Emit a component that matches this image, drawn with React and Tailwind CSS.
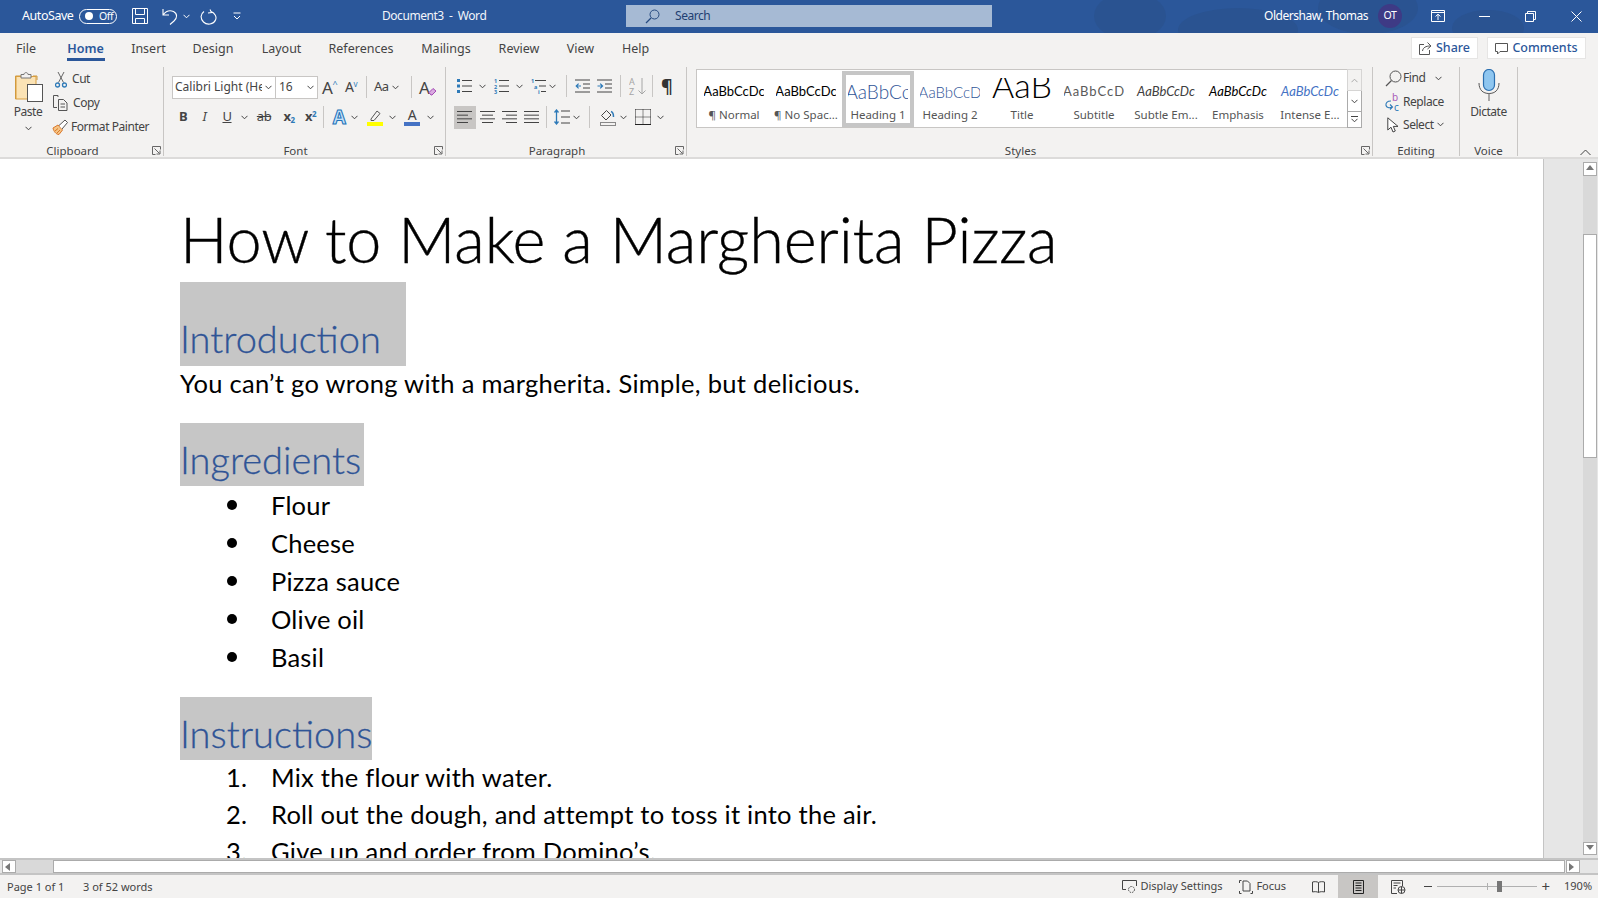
import React from 'react';

const UI = "font-['Noto_Sans','Open_Sans',sans-serif]";
const DOC = "font-['Lato','Carlito',sans-serif]";

const Chev = ({ className = '', color = '#444' }) => (
  <svg width="7" height="5" viewBox="0 0 7 5" className={className} fill="none" stroke={color} strokeWidth="1">
    <path d="M0.5 0.8 L3.5 3.8 L6.5 0.8" />
  </svg>
);

const VSep = ({ className = '' }) => <div className={`w-px h-[22px] bg-[#c8c6c4] ${className}`} />;

const Launcher = () => (
  <svg width="9" height="9" viewBox="0 0 9 9" fill="none" stroke="#666" strokeWidth="1">
    <path d="M8.5 3.5V0.5H0.5V8.5H3.5" />
    <path d="M2.5 2.5L7.5 7.5M8 4.5V8H4.5" />
  </svg>
);

// horizontal text lines used by the paragraph buttons
const Lines = ({ rows, w = 16, h = 14 }) => (
  <svg width={w} height={h} viewBox={`0 0 ${w} ${h}`} stroke="#444" strokeWidth="1">
    {rows.map(([x1, x2], i) => (
      <line key={i} x1={x1} x2={x2} y1={1.5 + i * ((h - 3) / (rows.length - 1))} y2={1.5 + i * ((h - 3) / (rows.length - 1))} />
    ))}
  </svg>
);

const Bullets = () => (
  <svg width="17" height="16" viewBox="0 0 17 16">
    <rect x="0" y="1" width="3" height="3" fill="#2e7ab8" />
    <rect x="0" y="6.5" width="3" height="3" fill="#2e7ab8" />
    <rect x="0" y="12" width="3" height="3" fill="#2e7ab8" />
    <path d="M5 2.5H15M5 8H15M5 13.5H15" stroke="#444" />
  </svg>
);

const Numbering = () => (
  <svg width="17" height="16" viewBox="0 0 17 16" fontFamily="Noto Sans, sans-serif" fontSize="5.5" fontWeight="700" fill="#2e7ab8">
    <text x="0" y="5">1</text>
    <text x="0" y="10.5">2</text>
    <text x="0" y="16">3</text>
    <path d="M5 2.5H15M5 8H15M5 13.5H15" stroke="#444" />
  </svg>
);

const Multilevel = () => (
  <svg width="17" height="16" viewBox="0 0 17 16" fontFamily="Noto Sans, sans-serif" fontSize="5.5" fontWeight="700" fill="#2e7ab8">
    <text x="0" y="5">1</text>
    <text x="3" y="10.5">a</text>
    <text x="7" y="16">i</text>
    <path d="M4 2.5H15M8 8H15M10 13.5H15" stroke="#444" />
  </svg>
);

const Indent = ({ out }) => (
  <svg width="16" height="14" viewBox="0 0 16 14">
    <path d="M0 1H15M8 5H15M8 9H15M0 13H15" stroke="#444" />
    {out ? (
      <path d="M6 7H1.2M3.6 4.6L1.2 7L3.6 9.4" stroke="#2e7ab8" strokeWidth="1.2" fill="none" />
    ) : (
      <path d="M0.5 7H5.5M3.2 4.6L5.6 7L3.2 9.4" stroke="#2e7ab8" strokeWidth="1.2" fill="none" />
    )}
  </svg>
);

const Sort = () => (
  <svg width="18" height="19" viewBox="0 0 18 19" fontFamily="Noto Sans, sans-serif" fontSize="9" fill="#a6a6a6">
    <text x="0" y="8">A</text>
    <text x="0" y="18">Z</text>
    <path d="M13 1V17M9.5 13.5L13 17L16.5 13.5" stroke="#a6a6a6" fill="none" />
  </svg>
);

const LineSpacing = () => (
  <svg width="16" height="16" viewBox="0 0 16 16">
    <path d="M7 2H16M7 8H16M7 14H16" stroke="#444" />
    <path d="M2.5 1V15M0.5 3.5L2.5 1L4.5 3.5M0.5 12.5L2.5 15L4.5 12.5" stroke="#2e7ab8" strokeWidth="1.3" fill="none" />
  </svg>
);

const Shading = () => (
  <svg width="16" height="17" viewBox="0 0 16 17" fill="none">
    <path d="M6.5 1.5L1.5 6.5L6 11L11 6Z" stroke="#444" />
    <path d="M11 2.5C13 3 13.5 4.5 13.5 8" stroke="#2e7ab8" strokeWidth="1.5" />
    <rect x="0.5" y="13.5" width="15" height="3" stroke="#888" fill="#f3f2f1" />
  </svg>
);

const Borders = () => (
  <svg width="16" height="16" viewBox="0 0 16 16" fill="none" stroke="#222">
    <path d="M0.5 0.5H15.5M0.5 0.5V15M15.5 0.5V15M8 0.5V15M0.5 8H15.5" strokeDasharray="1 1" />
    <path d="M0 15.5H16" />
  </svg>
);

const Paste = () => (
  <svg width="29" height="31" viewBox="0 0 29 31" fill="none">
    <path d="M1.5 28V5H7M19 5H23V9" stroke="#c8963c" strokeWidth="1" />
    <rect x="2" y="5.5" width="20" height="22.5" fill="#fbe3b5" stroke="#d99e3f" />
    <path d="M7 7V3.5H10C10 1 14 1 14 3.5H17V7Z" fill="#f3f2f1" stroke="#777" />
    <rect x="13.5" y="13.5" width="15" height="17" fill="#fff" stroke="#555" />
  </svg>
);

const Cut = () => (
  <svg width="12" height="17" viewBox="0 0 12 17" fill="none">
    <path d="M3 1L8.5 11.5M9 1L3.5 11.5" stroke="#666" />
    <circle cx="2.5" cy="14" r="2" stroke="#2e7ab8" strokeWidth="1.3" />
    <circle cx="9.5" cy="14" r="2" stroke="#2e7ab8" strokeWidth="1.3" />
  </svg>
);

const Copy = () => (
  <svg width="16" height="16" viewBox="0 0 16 16" fill="none" stroke="#555">
    <path d="M6 0.5H1.5V12.5H5" />
    <path d="M6.5 4.5H11.5L15 8V15.5H6.5ZM8.5 9H13M8.5 12H13" />
    <path d="M2 0.5H6V2" />
  </svg>
);

const Painter = () => (
  <svg width="17" height="16" viewBox="0 0 17 16" fill="none">
    <path d="M1 9L6 6L10.5 11L7 15.5C4 15.5 1.5 12 1 9Z" fill="#f6c585" stroke="#d9772b" />
    <path d="M7 6.5L13 1L15.5 3.5L10 10" stroke="#555" fill="#fff" />
    <path d="M3 12L6 9.5M5 14L8 11" stroke="#d9772b" />
  </svg>
);

const Find = () => (
  <svg width="17" height="17" viewBox="0 0 17 17" fill="none" stroke="#555">
    <circle cx="10.5" cy="6.5" r="5.5" />
    <path d="M6.5 10.5L1 16" strokeWidth="1.3" />
  </svg>
);

const Replace = () => (
  <svg width="16" height="18" viewBox="0 0 16 18" fontFamily="Noto Sans, sans-serif" fontSize="10" fill="none">
    <text x="7" y="7.5" fill="#a85cb8" stroke="none">b</text>
    <text x="9" y="17.5" fill="#2e7ab8" stroke="none">c</text>
    <path d="M6 8C2 8 0.5 10 1 12.5C1.5 14.5 4 15.5 7 14M5 11.5L7.5 14L5 16.5" stroke="#2e7ab8" strokeWidth="1.1" />
  </svg>
);

const Cursor = () => (
  <svg width="12" height="16" viewBox="0 0 12 16" fill="#fff" stroke="#444">
    <path d="M0.8 0.8V13L4 10.2L6 15L8.3 14L6.3 9.4H11Z" />
  </svg>
);

const Mic = () => (
  <svg width="22" height="32" viewBox="0 0 22 32" fill="none">
    <rect x="5.5" y="0.5" width="11" height="21" rx="5.5" fill="#8ec6f0" stroke="#2b6fb0" strokeWidth="1.2" />
    <path d="M1 14C1 21 5 24.5 11 24.5C17 24.5 21 21 21 14" stroke="#555" />
    <path d="M11 24.5V32" stroke="#888" strokeWidth="1.4" />
  </svg>
);

const GALLERY = [
  { label: '¶ Normal', sample: 'AaBbCcDc', cls: "text-[13px] text-black" },
  { label: '¶ No Spac...', sample: 'AaBbCcDc', cls: "text-[13px] text-black" },
  { label: 'Heading 1', sample: 'AaBbCc', cls: "text-[19px] font-light text-[#2f5496]", active: true },
  { label: 'Heading 2', sample: 'AaBbCcD', cls: "text-[15px] font-light text-[#2f5496]" },
  { label: 'Title', sample: 'AaB', cls: "relative top-[-7px] text-[34px] font-light leading-[30px] text-black" },
  { label: 'Subtitle', sample: 'AaBbCcD', cls: "text-[13px] tracking-[1px] text-[#5a5a5a]" },
  { label: 'Subtle Em...', sample: 'AaBbCcDc', cls: "text-[13px] italic text-[#404040]" },
  { label: 'Emphasis', sample: 'AaBbCcDc', cls: "text-[13px] italic text-black" },
  { label: 'Intense E...', sample: 'AaBbCcDc', cls: "text-[13px] italic text-[#4472c4]" },
];

const TABS = [
  ['File', 'w-[52px]'],
  ['Home', 'w-[67px]'],
  ['Insert', 'w-[59px]'],
  ['Design', 'w-[70px]'],
  ['Layout', 'w-[67px]'],
  ['References', 'w-[92px]'],
  ['Mailings', 'w-[78px]'],
  ['Review', 'w-[68px]'],
  ['View', 'w-[55px]'],
  ['Help', 'w-[55px]'],
];

const TitleBar = () => (
  <div className="relative flex h-[33px] items-center overflow-hidden bg-[#2b579a] pb-px text-white tracking-[-0.45px]">
    <svg className="absolute right-0 top-0" width="520" height="33" viewBox="0 0 520 33" fill="#2a5391">
      <ellipse cx="52" cy="16" rx="36" ry="24" />
      <ellipse cx="160" cy="30" rx="60" ry="22" />
      <ellipse cx="290" cy="8" rx="50" ry="26" />
      <ellipse cx="410" cy="28" rx="36" ry="18" />
    </svg>
    <span className="relative ml-[22px] w-[57px] text-[12.5px]">AutoSave</span>
    <div className="relative flex h-[15px] w-[38px] items-center rounded-full border border-white">
      <div className="ml-[5px] h-[8px] w-[8px] rounded-full bg-white" />
      <span className="ml-[6px] text-[10.5px] leading-none">Off</span>
    </div>
    <svg className="relative ml-[15px]" width="16" height="16" viewBox="0 0 16 16" fill="none" stroke="#fff">
      <path d="M0.5 0.5H15.5V15.5H0.5ZM3.5 0.5V6.5H12.5V0.5M3.5 15.5V10.5H12.5V15.5" />
    </svg>
    <svg className="relative ml-[14px]" width="17" height="17" viewBox="0 0 17 17" fill="none" stroke="#fff" strokeWidth="1.1">
      <path d="M1 1V7H7M1 7C4 3 8 2 11.5 3.5C15.5 5.5 15.5 10 12 13L8 16.5" />
    </svg>
    <Chev className="relative ml-[4px]" color="#fff" />
    <svg className="relative ml-[10px]" width="17" height="17" viewBox="0 0 17 17" fill="none" stroke="#fff" strokeWidth="1.1">
      <path d="M10 1.5L11.5 4.5L8 5M11 3.5C15 5 17 9 15.5 12C13.5 16.5 7 17.5 3.5 14C0 10.5 0.5 6 4 3.5" />
    </svg>
    <svg className="relative ml-[16px]" width="8" height="8" viewBox="0 0 8 8" fill="none" stroke="#fff">
      <path d="M0.5 1H7.5M1 4L4 7L7 4" />
    </svg>
    <span className="relative ml-[141px] w-[244px] text-[12px] text-[#f2f5fa]">Document3 &nbsp;-&nbsp; Word</span>
    <div className="relative flex h-[22px] w-[366px] items-center bg-[#a6bad4] text-[12px] text-[#1f3f72]">
      <svg className="ml-[19px]" width="15" height="15" viewBox="0 0 15 15" fill="none" stroke="#264a80">
        <circle cx="9.5" cy="5.5" r="4.5" />
        <path d="M6 9L1 14" strokeWidth="1.2" />
      </svg>
      <span className="ml-[15px]">Search</span>
    </div>
    <span className="relative ml-[272px] w-[114px] whitespace-nowrap text-[12px]">Oldershaw, Thomas</span>
    <div className="relative flex h-[24px] w-[24px] items-center justify-center rounded-full bg-[#3e3a85] text-[10.5px]">OT</div>
    <svg className="relative ml-[29px]" width="14" height="12" viewBox="0 0 14 12" fill="none" stroke="#fff">
      <path d="M0.5 0.5H13.5V11.5H0.5ZM0.5 2.5H13.5M7 10V4.5M4.5 6.5L7 4.2L9.5 6.5" />
    </svg>
    <div className="relative ml-[34px] h-px w-[11px] bg-white" />
    <svg className="relative ml-[35px]" width="11" height="11" viewBox="0 0 11 11" fill="none" stroke="#fff">
      <path d="M0.5 2.5H8.5V10.5H0.5ZM2.5 2.5V0.5H10.5V8.5H8.5" />
    </svg>
    <svg className="relative ml-[35px]" width="11" height="11" viewBox="0 0 11 11" fill="none" stroke="#fff">
      <path d="M0.5 0.5L10.5 10.5M10.5 0.5L0.5 10.5" />
    </svg>
  </div>
);

const TabRow = () => (
  <div className="flex h-[29px] bg-[#f3f2f1] text-[12.5px] text-[#444]">
    {TABS.map(([name, w]) => (
      <div key={name} className={`relative flex h-full items-center justify-center pt-[4px] ${w}`}>
        <span className={name === 'Home' ? 'font-semibold text-[#2b579a]' : ''}>{name}</span>
        {name === 'Home' && <div className="absolute bottom-[1px] left-[15px] h-[3px] w-[38px] bg-[#2b579a]" />}
      </div>
    ))}
    <div className="ml-auto mt-[4px] flex h-[22px] text-[12.5px] font-medium text-[#2b579a]">
      <div className="flex w-[67px] items-center justify-center gap-[4px] border border-[#e6e5e4] bg-white pt-px">
        <svg width="13" height="13" viewBox="0 0 13 13" fill="none" stroke="#555">
          <path d="M5 2.5H0.5V12.5H10.5V8M3.5 9C4 5.5 7 4 11 4M8.5 0.5L12 4L8.5 7" />
        </svg>
        Share
      </div>
      <div className="ml-[9px] mr-[12px] flex w-[99px] items-center justify-center gap-[4px] border border-[#e6e5e4] bg-white pt-px">
        <svg width="13" height="12" viewBox="0 0 13 12" fill="none" stroke="#555">
          <path d="M0.5 0.5H12.5V8.5H5L2.5 11V8.5H0.5Z" />
        </svg>
        Comments
      </div>
    </div>
  </div>
);

const Group = ({ label, className, launcher, children }) => (
  <section className={`flex h-[89px] shrink-0 flex-col border-r border-[#c8c6c4] ${className}`}>
    <div className="h-[78px] tracking-[-0.45px]">{children}</div>
    <div className={`relative flex h-[11px] items-center justify-center text-[11.5px] text-[#444] ${launcher ? 'pr-[18px]' : ''}`}>
      {label}
      {launcher && (
        <span className="absolute right-[2px] top-[1px] flex">
          <Launcher />
        </span>
      )}
    </div>
  </section>
);

const Ribbon = () => (
  <div className="flex h-[97px] bg-[#f3f2f1] pt-[5px] text-[12px] text-[#444] border-b-2 border-[#dcdbda]">
    {/* Clipboard */}
    <Group label="Clipboard" launcher className="w-[164px]">
      <div className="flex h-full">
        <div className="ml-[9px] flex w-[38px] flex-col items-center pt-[4px]">
          <Paste />
          <span className="mt-[1px]">Paste</span>
          <Chev className="mt-[5px]" />
        </div>
        <div className="ml-[5px] flex flex-col">
          <div className="flex h-[24px] items-center"><span className="ml-[3px] flex w-[17px]"><Cut /></span>Cut</div>
          <div className="flex h-[24px] items-center"><span className="flex w-[21px]"><Copy /></span>Copy</div>
          <div className="flex h-[24px] items-center"><span className="flex w-[19px]"><Painter /></span>Format Painter</div>
        </div>
      </div>
    </Group>

    {/* Font */}
    <Group label="Font" launcher className="w-[282px]">
      <div className="mt-[8px] flex h-[24px] items-center">
        <div className="ml-[8px] flex h-[23px] w-[104px] items-center border border-[#c8c6c4] bg-white pl-[2px] text-[12px] tracking-normal">
          <span className="w-[87px] overflow-hidden whitespace-nowrap">Calibri Light (Headings)</span>
          <Chev className="ml-[3px]" />
        </div>
        <div className="-ml-px flex h-[23px] w-[43px] items-center border border-[#c8c6c4] bg-white pl-[3px] text-[12px] tracking-normal">
          <span className="w-[28px]">16</span>
          <Chev />
        </div>
        <div className="ml-[4px] flex w-[17px] items-start text-[17px] leading-none">A<span className="text-[9px] leading-[9px] text-[#2e7ab8]">^</span></div>
        <div className="ml-[6px] flex w-[14px] items-start text-[14px] leading-none">A<span className="text-[8px] leading-[8px] text-[#2e7ab8]">v</span></div>
        <VSep className="ml-[7px]" />
        <div className="ml-[7px] flex w-[28px] items-center gap-[3px] text-[13px]">Aa<Chev /></div>
        <VSep className="ml-[9px]" />
        <div className="relative ml-[7px] w-[18px] text-[17px] leading-none">
          A
          <svg className="absolute bottom-0 right-0" width="9" height="9" viewBox="0 0 9 9">
            <path d="M1 5.5L5 1.5L8 4L4 8H3Z" fill="#d9a9e0" stroke="#a349b5" />
          </svg>
        </div>
      </div>
      <div className="mt-[6px] flex h-[24px] items-center">
        <div className="ml-[8px] w-[22px] text-center text-[13px] font-bold">B</div>
        <div className="w-[21px] text-center text-[13px] italic">I</div>
        <div className="w-[24px] text-center text-[13px] underline">U</div>
        <div className="flex w-[11px] justify-center"><Chev /></div>
        <div className="ml-[3px] w-[22px] text-center text-[13px] line-through">ab</div>
        <div className="ml-[3px] w-[22px] text-center text-[13px] font-bold">x<sub className="text-[8px] text-[#2e7ab8]">2</sub></div>
        <div className="w-[21px] text-center text-[13px] font-bold">x<sup className="text-[8px] text-[#2e7ab8]">2</sup></div>
        <VSep className="ml-[2px]" />
        <div className="ml-[7px] w-[16px] text-center text-[19px] font-bold leading-none text-[#c5e2f8] [-webkit-text-stroke:1px_#2272b9]">A</div>
        <div className="ml-[2px] flex w-[10px] justify-center"><Chev /></div>
        <svg className="ml-[8px]" width="16" height="17" viewBox="0 0 16 17" fill="none">
          <path d="M4 10L10 2L13 4.5L7 11.5H4Z" stroke="#555" />
          <rect x="0" y="13" width="16" height="4" fill="#ffff00" />
        </svg>
        <div className="ml-[4px] flex w-[10px] justify-center"><Chev /></div>
        <div className="ml-[7px] flex w-[16px] flex-col items-center">
          <span className="text-[14px] leading-[14px]">A</span>
          <div className="h-[4px] w-[16px] bg-[#4472c4]" />
        </div>
        <div className="ml-[5px] flex w-[10px] justify-center"><Chev /></div>
      </div>
    </Group>

    {/* Paragraph */}
    <Group label="Paragraph" launcher className="w-[241px]">
      <div className="mt-[7px] flex h-[24px] items-center">
        <span className="ml-[11px] flex"><Bullets /></span>
        <Chev className="ml-[5px]" />
        <span className="ml-[8px] flex"><Numbering /></span>
        <Chev className="ml-[5px]" />
        <span className="ml-[8px] flex"><Multilevel /></span>
        <Chev className="ml-[1px]" />
        <VSep className="ml-[10px]" />
        <span className="ml-[8px] flex"><Indent out /></span>
        <span className="ml-[6px] flex"><Indent /></span>
        <VSep className="ml-[7px]" />
        <span className="ml-[8px] flex"><Sort /></span>
        <VSep className="ml-[5px]" />
        <span className="ml-[8px] text-[18px] font-bold leading-none text-[#333]">¶</span>
      </div>
      <div className="mt-[7px] flex h-[24px] items-center">
        <div className="ml-[8px] flex h-[23px] w-[22px] items-center justify-center bg-[#c8c6c4]"><Lines rows={[[0, 15], [0, 11], [0, 15], [0, 11]]} /></div>
        <span className="ml-[4px] flex"><Lines rows={[[0, 15], [2, 13], [0, 15], [2, 13]]} /></span>
        <span className="ml-[6px] flex"><Lines rows={[[0, 15], [4, 15], [0, 15], [4, 15]]} /></span>
        <span className="ml-[6px] flex"><Lines rows={[[0, 15], [0, 15], [0, 15], [0, 15]]} /></span>
        <VSep className="ml-[6px]" />
        <span className="ml-[7px] flex"><LineSpacing /></span>
        <Chev className="ml-[3px]" />
        <VSep className="ml-[9px]" />
        <span className="ml-[10px] flex"><Shading /></span>
        <Chev className="ml-[4px]" />
        <span className="ml-[8px] flex"><Borders /></span>
        <Chev className="ml-[6px]" />
      </div>
    </Group>

    {/* Styles */}
    <Group label="Styles" launcher className="w-[686px]">
      <div className="ml-[9px] mt-[2px] flex h-[59px] tracking-normal">
        <div className="flex h-[59px] w-[651px] border border-r-0 border-[#c8c6c4] bg-white pl-px pt-px">
          {GALLERY.map((g) => (
            <div
              key={g.label}
              className={`flex h-[56px] w-[72px] shrink-0 flex-col items-center overflow-hidden ${g.active ? 'border-[4px] border-[#c6c6c6]' : 'border-[4px] border-transparent'}`}
            >
              <div className={`mt-[3px] flex h-[28px] w-[60px] shrink-0 items-center justify-center overflow-hidden whitespace-nowrap ${DOC}`}>
                <span className={g.cls}>{g.sample}</span>
              </div>
              <span className="mt-[2px] whitespace-nowrap text-[11.5px] leading-[14px] text-[#555]">{g.label}</span>
            </div>
          ))}
        </div>
        <div className="flex w-[15px] flex-col">
          <div className="flex h-[22px] items-center justify-center border border-[#d6d5d4] bg-[#f3f2f1]">
            <Chev className="rotate-180" color="#aaa" />
          </div>
          <div className="flex h-[21px] items-center justify-center border border-t-0 border-[#ababab] bg-white"><Chev /></div>
          <div className="flex h-[16px] flex-col items-center justify-center gap-[1px] border border-t-0 border-[#ababab] bg-white">
            <div className="h-px w-[7px] bg-[#444]" />
            <Chev />
          </div>
        </div>
      </div>
    </Group>

    {/* Editing */}
    <Group label="Editing" className="w-[87px]">
      <div className="-mt-px flex h-[24px] items-center pl-[12px]"><span className="flex w-[18px]"><Find /></span>Find<Chev className="ml-[10px]" /></div>
      <div className="flex h-[24px] items-center pl-[12px]"><span className="flex w-[18px]"><Replace /></span>Replace</div>
      <div className="flex h-[21px] items-center pl-[14px]"><span className="flex w-[16px]"><Cursor /></span>Select<Chev className="ml-[3px]" /></div>
    </Group>

    {/* Voice */}
    <Group label="Voice" className="w-[58px]">
      <div className="flex flex-col items-center pt-[2px]">
        <Mic />
        <span className="mt-[2px]">Dictate</span>
      </div>
    </Group>

    <div className="flex flex-1 items-end justify-end pb-[1px] pr-[7px]">
      <svg width="11" height="7" viewBox="0 0 11 7" fill="none" stroke="#444">
        <path d="M0.5 6L5.5 1L10.5 6" />
      </svg>
    </div>
  </div>
);

const HL = ({ className, children }) => (
  <div className={`flex items-end bg-[#c6c6c6] ${className}`}>{children}</div>
);

const Heading = ({ children }) => (
  <span className="text-[38px] font-light leading-[44px] text-[#2f5496] [-webkit-text-stroke:0.3px_#2f5496]">{children}</span>
);

const Page = () => (
  <div className={`h-[699px] flex-1 overflow-hidden border-r border-[#c4c4c4] bg-white pl-[180px] text-black ${DOC}`}>
    <div className="flex h-[123px] items-end pb-[3px] text-[63px] font-light leading-[80px] tracking-[-0.1px] [-webkit-text-stroke:0.4px_#000]">How to Make a Margherita Pizza</div>
    <HL className="h-[84px] w-[226px] pb-[6px]"><Heading>Introduction</Heading></HL>
    <div className="h-[57px] text-[25.5px] leading-[34px] tracking-[0.3px]">You can’t go wrong with a margherita. Simple, but delicious.</div>
    <HL className="h-[63px] w-[184px] pb-[5px]"><Heading>Ingredients</Heading></HL>
    <ul className="h-[211px] text-[25.5px] leading-[38px] tracking-[0.2px]">
      {['Flour', 'Cheese', 'Pizza sauce', 'Olive oil', 'Basil'].map((t) => (
        <li key={t} className="flex h-[38px] items-center">
          <span className="ml-[47px] w-[44px]"><span className="block h-[10px] w-[10px] rounded-full bg-black" /></span>
          {t}
        </li>
      ))}
    </ul>
    <HL className="h-[63px] w-[192px] pb-[5px]"><Heading>Instructions</Heading></HL>
    <ol className="-mt-px text-[25.5px] leading-[37px] tracking-[0.25px]">
      {['Mix the flour with water.', 'Roll out the dough, and attempt to toss it into the air.', 'Give up and order from Domino’s.'].map((t, i) => (
        <li key={t} className="flex h-[37px] items-center">
          <span className="ml-[46px] w-[45px]">{i + 1}.</span>
          {t}
        </li>
      ))}
    </ol>
  </div>
);

const Arrow = ({ dir }) => {
  const d = { up: 'M1 6L5 1L9 6Z', down: 'M1 1L5 6L9 1Z', left: 'M6 1L1 5L6 9Z', right: 'M1 1L6 5L1 9Z' }[dir];
  return (
    <svg width="10" height="10" viewBox="0 0 10 10" fill="#777">
      <path d={d} />
    </svg>
  );
};

const VScroll = () => (
  <div className="flex h-[699px] w-[54px] shrink-0 justify-end bg-[#e6e6e6] pr-px pt-[3px]">
    <div className="flex h-[693px] w-[14px] flex-col bg-[#d9d9d9]">
      <div className="flex h-[14px] items-center justify-center border border-[#ababab] bg-white"><Arrow dir="up" /></div>
      <div className="h-[58px]" />
      <div className="h-[224px] border border-[#ababab] bg-white" />
      <div className="flex-1" />
      <div className="flex h-[13px] items-center justify-center border border-[#ababab] bg-white"><Arrow dir="down" /></div>
    </div>
  </div>
);

const HScroll = () => (
  <div className="flex h-[17px] items-center border-y-2 border-[#c4c4c4] bg-[#e6e6e6] pl-[2px]">
    <div className="flex h-[13px] w-[14px] items-center justify-center border border-[#ababab] bg-white"><Arrow dir="left" /></div>
    <div className="h-[13px] w-[37px] bg-[#d9d9d9]" />
    <div className="h-[13px] w-[1512px] border border-[#ababab] bg-white" />
    <div className="ml-[1px] flex h-[13px] w-[14px] items-center justify-center border border-[#ababab] bg-white"><Arrow dir="right" /></div>
  </div>
);

const StatusBar = () => (
  <div className="flex h-[23px] items-center bg-[#f3f2f1] pt-[1px] text-[11px] text-[#444]">
    <span className="ml-[7px] w-[76px]">Page 1 of 1</span>
    <span>3 of 52 words</span>
    <div className="-mt-px ml-auto flex h-[23px] items-center">
      <svg width="15" height="14" viewBox="0 0 15 14" fill="none" stroke="#444">
        <path d="M4 9.5H0.5V0.5H14.5V6" />
        <circle cx="9.5" cy="9.5" r="3" strokeDasharray="1.5 1" />
      </svg>
      <span className="ml-[3px] w-[99px] whitespace-nowrap">Display Settings</span>
      <svg width="14" height="14" viewBox="0 0 14 14" fill="none" stroke="#444">
        <path d="M4 1H8.5L11 3.5V11H4Z" />
        <path d="M0.5 3V0.5H2.5M0.5 11V13.5H2.5M13.5 11V13.5H11.5" />
      </svg>
      <span className="ml-[3px] w-[56px]">Focus</span>
      <svg width="13" height="12" viewBox="0 0 13 12" fill="none" stroke="#444">
        <path d="M6.5 1.5C5 0.5 2.5 0.5 0.5 1V11C2.5 10.5 5 10.5 6.5 11.5C8 10.5 10.5 10.5 12.5 11V1C10.5 0.5 8 0.5 6.5 1.5ZM6.5 1.5V11.5" />
      </svg>
      <div className="ml-[13px] flex h-full w-[40px] items-center justify-center bg-[#c8c6c4]">
        <svg width="11" height="14" viewBox="0 0 11 14" fill="none" stroke="#222">
          <path d="M0.5 0.5H10.5V13.5H0.5ZM2.5 3H8.5M2.5 5.5H8.5M2.5 8H8.5M2.5 10.5H8.5" />
        </svg>
      </div>
      <svg className="ml-[13px]" width="15" height="14" viewBox="0 0 15 14" fill="none" stroke="#444">
        <path d="M6 13.5H0.5V0.5H11.5V6M2.5 3H9.5M2.5 5.5H6.5M2.5 8H5" />
        <circle cx="10.5" cy="10" r="3.5" />
        <path d="M7 10H14M10.5 6.5V13.5" />
      </svg>
      <div className="ml-[18px] h-px w-[8px] bg-[#444]" />
      <div className="relative ml-[5px] h-px w-[100px] bg-[#b0b0b0]">
        <div className="absolute left-[50px] top-[-3px] h-[7px] w-px bg-[#b0b0b0]" />
        <div className="absolute left-[60px] top-[-5px] h-[11px] w-[5px] bg-[#777]" />
      </div>
      <span className="ml-[4px] text-[15px] leading-none">+</span>
      <span className="ml-[14px] mr-[7px] w-[27px]">190%</span>
    </div>
  </div>
);

export default function App() {
  return (
    <div className={`flex h-[898px] w-[1598px] flex-col overflow-hidden bg-white ${UI}`}>
      <TitleBar />
      <TabRow />
      <Ribbon />
      <div className="flex h-[699px]">
        <Page />
        <VScroll />
      </div>
      <HScroll />
      <StatusBar />
    </div>
  );
}
